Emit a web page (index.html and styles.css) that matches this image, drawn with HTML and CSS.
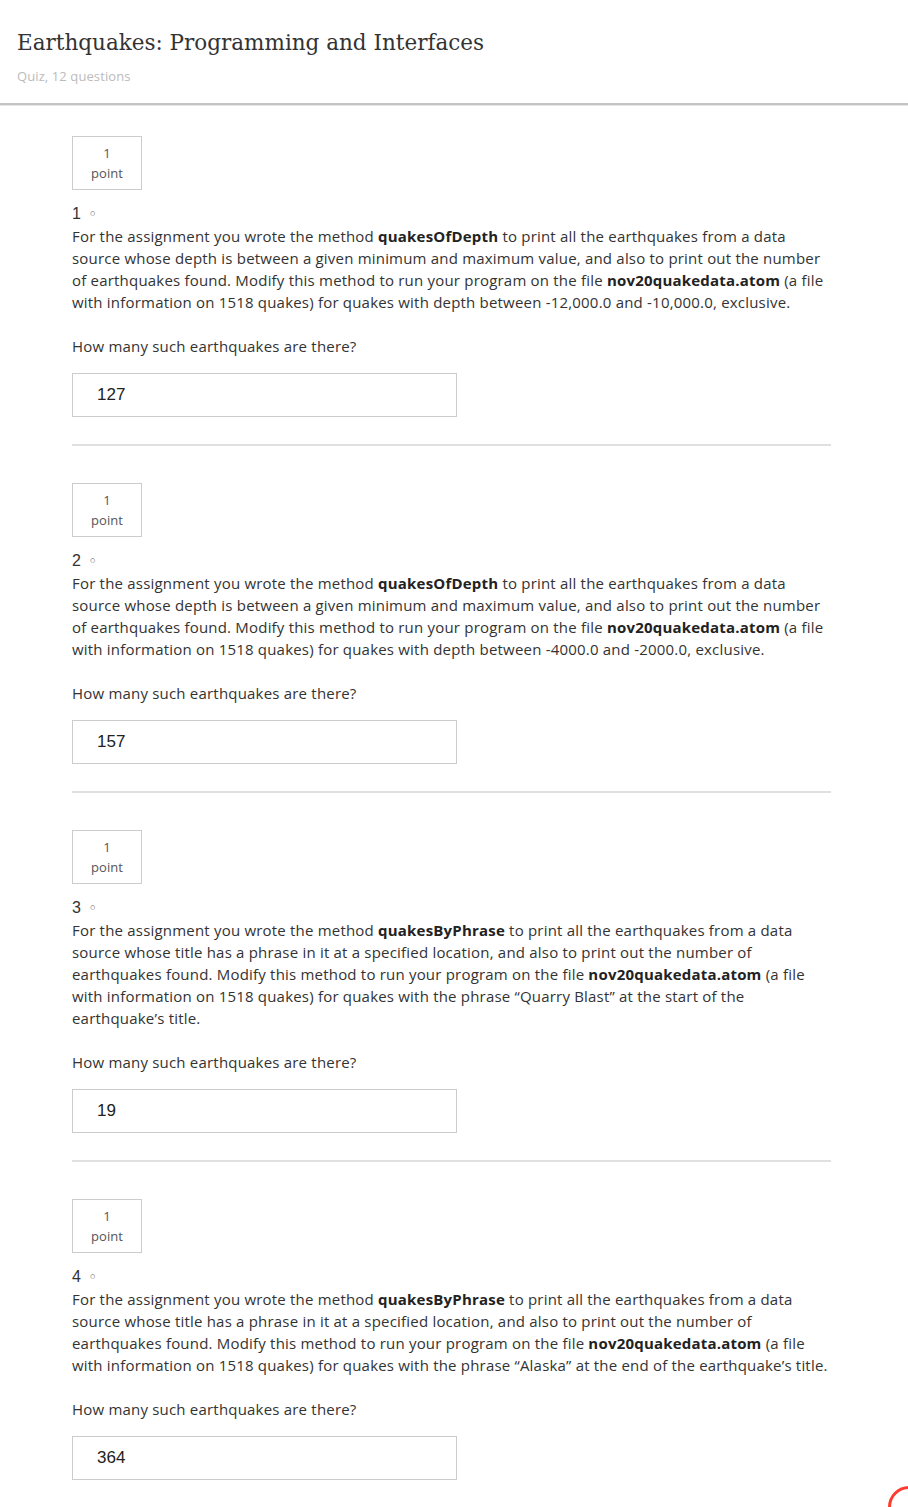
FILE: index.html
```html
<!DOCTYPE html>
<html>
<head>
<meta charset="utf-8">
<link rel="stylesheet" href="styles.css">
</head>
<body>
<header class="header">
  <h1 class="title">Earthquakes: Programming and Interfaces</h1>
  <div class="subtitle">Quiz, 12 questions</div>
</header>
<main class="quiz">
  <section class="question">
    <div class="points"><span>1</span><span>point</span></div>
    <div class="qnum">1 <span class="dot">◦</span></div>
    <p class="qtext">For the assignment you wrote the method <b>quakesOfDepth</b> to print all the earthquakes from a data source whose depth is between a given minimum and maximum value, and also to print out the number of earthquakes found. Modify this method to run your program on the file <b>nov20quakedata.atom</b> (a file with information on 1518 quakes) for quakes with depth between -12,000.0 and -10,000.0, exclusive.</p>
    <p class="qask">How many such earthquakes are there?</p>
    <div class="answer">127</div>
  </section>
  <section class="question">
    <div class="points"><span>1</span><span>point</span></div>
    <div class="qnum">2 <span class="dot">◦</span></div>
    <p class="qtext">For the assignment you wrote the method <b>quakesOfDepth</b> to print all the earthquakes from a data source whose depth is between a given minimum and maximum value, and also to print out the number of earthquakes found. Modify this method to run your program on the file <b>nov20quakedata.atom</b> (a file with information on 1518 quakes) for quakes with depth between -4000.0 and -2000.0, exclusive.</p>
    <p class="qask">How many such earthquakes are there?</p>
    <div class="answer">157</div>
  </section>
  <section class="question">
    <div class="points"><span>1</span><span>point</span></div>
    <div class="qnum">3 <span class="dot">◦</span></div>
    <p class="qtext">For the assignment you wrote the method <b>quakesByPhrase</b> to print all the earthquakes from a data source whose title has a phrase in it at a specified location, and also to print out the number of earthquakes found. Modify this method to run your program on the file <b>nov20quakedata.atom</b> (a file with information on 1518 quakes) for quakes with the phrase “Quarry Blast” at the start of the earthquake’s title.</p>
    <p class="qask">How many such earthquakes are there?</p>
    <div class="answer">19</div>
  </section>
  <section class="question">
    <div class="points"><span>1</span><span>point</span></div>
    <div class="qnum">4 <span class="dot">◦</span></div>
    <p class="qtext">For the assignment you wrote the method <b>quakesByPhrase</b> to print all the earthquakes from a data source whose title has a phrase in it at a specified location, and also to print out the number of earthquakes found. Modify this method to run your program on the file <b>nov20quakedata.atom</b> (a file with information on 1518 quakes) for quakes with the phrase “Alaska” at the end of the earthquake’s title.</p>
    <p class="qask">How many such earthquakes are there?</p>
    <div class="answer">364</div>
  </section>
</main>
<svg class="spinner" width="44" height="44" viewBox="0 0 44 44"><circle cx="22" cy="22" r="19.5" fill="none" stroke="#ff3b30" stroke-width="3"/></svg>
</body>
</html>
```
FILE: styles.css
```css
html, body {
  margin: 0;
  padding: 0;
  background: #fff;
}
body {
  font-family: "Open Sans", "Liberation Sans", sans-serif;
  color: #333;
  overflow: hidden;
}
.header {
  padding: 28px 17px 0;
  height: 75px;
  border-bottom: 2px solid #c4c4c4;
  box-shadow: 0 1px 0 #e6e6e6;
}
.title {
  margin: 0;
  font-family: "DejaVu Serif", "Liberation Serif", serif;
  font-weight: normal;
  font-size: 21.5px;
  line-height: 30px;
  color: #333;
}
.subtitle {
  margin-top: 8px;
  font-size: 13px;
  line-height: 20px;
  color: #bbb;
  letter-spacing: 0.1px;
}
.quiz {
  padding: 31px 0 0 72px;
  width: 759px;
}
.question {
  border-bottom: 2px solid #e0e0e0;
  margin-bottom: 37px;
  padding-bottom: 27px;
}
.points {
  width: 68px;
  height: 52px;
  border: 1px solid #ccc;
  display: flex;
  flex-direction: column;
  align-items: center;
  justify-content: center;
  font-size: 13px;
  line-height: 20px;
  color: #555;
  letter-spacing: 0.1px;
}
.qnum {
  margin-top: 13px;
  font-family: "Liberation Sans", Arial, sans-serif;
  font-size: 16px;
  line-height: 21px;
  color: #333;
}
.dot {
  display: inline-block;
  margin-left: 3px;
  font-family: "DejaVu Sans", sans-serif;
  font-size: 15px;
  color: #555;
}
.qtext {
  margin: 0;
  font-size: 15px;
  line-height: 22px;
  letter-spacing: 0.2px;
  width: 759px;
}
.qtext b {
  font-weight: bold;
  color: #222;
}
.qask {
  margin: 22px 0 0;
  font-size: 15px;
  line-height: 22px;
  letter-spacing: 0.2px;
}
.answer {
  margin-top: 16px;
  width: 359px;
  height: 42px;
  border: 1px solid #ccc;
  padding-left: 24px;
  font-family: "Liberation Sans", Arial, sans-serif;
  font-size: 17px;
  line-height: 42px;
  color: #222;
}
.spinner {
  position: fixed;
  left: 887px;
  top: 1485px;
}
```
